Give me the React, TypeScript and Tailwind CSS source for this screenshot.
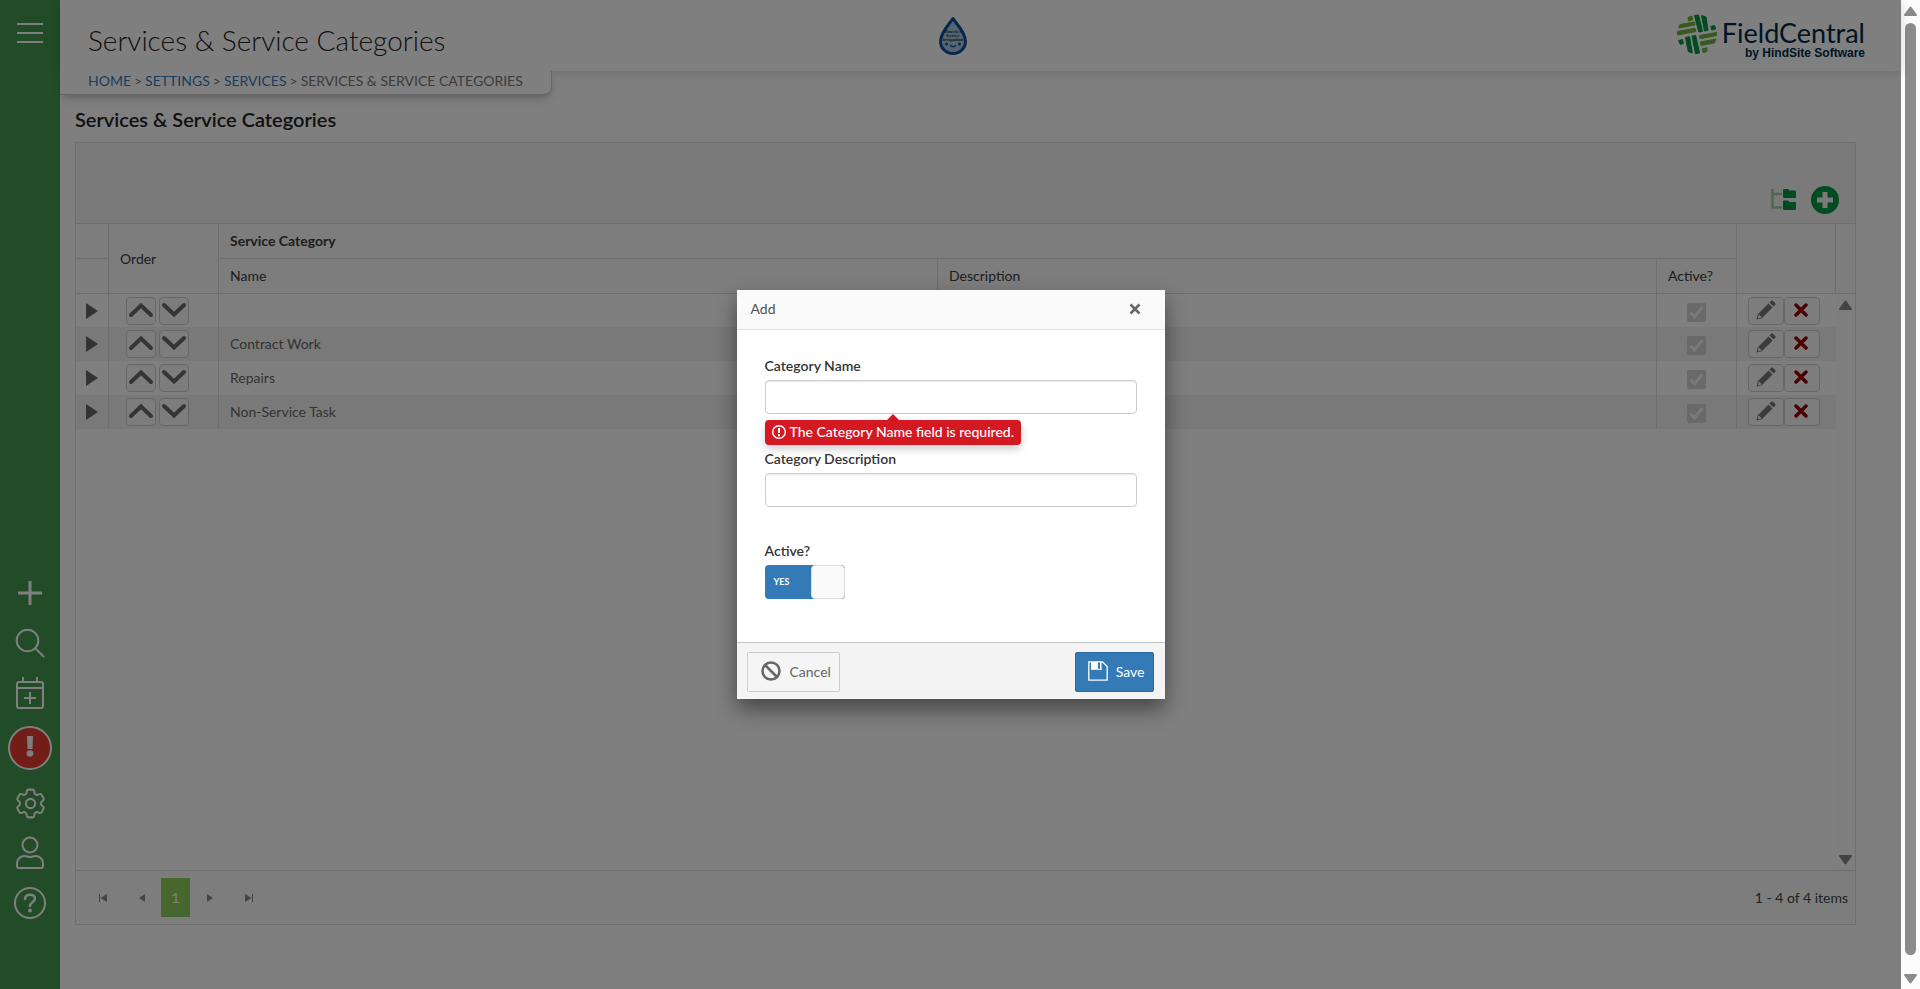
import { type ReactNode } from "react";
import { HiOutlineCog6Tooth } from "react-icons/hi2";

const categories = [
  { name: "", description: "" },
  { name: "Contract Work", description: "" },
  { name: "Repairs", description: "" },
  { name: "Non-Service Task", description: "" },
];

function DropLogo() {
  return (
    <svg width="30" height="40" viewBox="0 0 30 40" role="img" aria-label="Burch's Better Irrigation">
      <path d="M15 2.500C11.500 8 2.500 16 2.500 25.500A12.500 12 0 0 0 27.500 25.500C27.500 16 18.500 8 15 2.500Z" fill="#a9cbe3" stroke="#0f4fa0" strokeWidth="3" strokeLinejoin="round" />
      <g fill="#333" fontFamily="Liberation Serif, serif" fontSize="5" fontWeight="700" textAnchor="middle">
        <text x="15" y="17">Burch's</text>
        <text x="15" y="21">better</text>
        <text x="15" y="25">irrigation</text>
      </g>
      <circle cx="8.500" cy="28" r="1.500" fill="#0f4fa0" />
      <circle cx="21.500" cy="28" r="1.500" fill="#0f4fa0" />
      <path d="M12.500 29.500q2.500 2.500 5 0" fill="none" stroke="#0f4fa0" strokeWidth="1.500" strokeLinecap="round" />
    </svg>
  );
}

function FieldCentralLogo() {
  return (
    <div className="flex items-start gap-1 pt-0.5 text-[#002b49]">
      <svg width="42" height="42" viewBox="0 0 42 42" aria-hidden="true">
        <g fill="#6cb33f" stroke="#6cb33f" strokeWidth="1" strokeLinejoin="round">
          <path d="M12 3.500l4-1.500.5 4-4 1z" />
          <path d="M4 10.500l14.500-2.500.500 3L2.500 14z" />
          <path d="M1.500 17.500l17.500-3.200.700 3.300L1.500 21z" />
          <path d="M23.500 21.500l17-3v3L24 24.800z" />
          <path d="M24.500 28l15.500-3-1.500 4-13.500 2.500z" />
          <path d="M26.500 34.800l4.500-1v3.500l-4 1.500z" />
        </g>
        <g fill="#00963f" stroke="#00963f" strokeWidth="1" strokeLinejoin="round">
          <path d="M18.500 1.500l4-.500L26.500 17.500l-3.700.500z" />
          <path d="M25.500 1.500l4.500 1.500 2 13.500-3.500.500z" />
          <path d="M34.800 12.500l3.700-1 1.200 3.500-4 1z" />
          <path d="M2.500 26.500l4-1 .800 4-3 .8z" />
          <path d="M9.500 23.500l4-.8 2.800 16.300-4-1.500z" />
          <path d="M16 22l3.700-.5 3.800 17.500-4 .5z" />
        </g>
      </svg>
      <div className="flex flex-col items-end pt-[5px]">
        <span className="text-[27px] leading-7">FieldCentral</span>
        <span className="font-['Liberation_Sans',sans-serif] text-[12px] leading-3 font-bold">by HindSite Software</span>
      </div>
    </div>
  );
}

function SideButton({ label, className, children }: { label: string; className: string; children: ReactNode }) {
  return (
    <button type="button" aria-label={label} className={`flex w-full items-center justify-center ${className}`}>
      {children}
    </button>
  );
}

function Sidebar() {
  return (
    <nav className="flex w-15 shrink-0 flex-col bg-[#449850] pb-[62px] text-white">
      <SideButton label="Menu" className="mt-[15px] h-9">
        <svg width="26" height="20" viewBox="0 0 26 20" stroke="currentColor" strokeWidth="2">
          <path d="M0 1h26M0 10h26M0 19h26" />
        </svg>
      </SideButton>
      <div className="mt-auto flex flex-col">
        <SideButton label="Add" className="h-12">
          <svg width="24" height="24" viewBox="0 0 24 24" stroke="currentColor" strokeWidth="3">
            <path d="M0 12h24M12 0v24" />
          </svg>
        </SideButton>
        <SideButton label="Search" className="h-13">
          <svg width="30" height="30" viewBox="0 0 30 30" fill="none" stroke="currentColor" strokeWidth="2" strokeLinecap="round">
            <circle cx="12.500" cy="12.500" r="10.800" />
            <path d="M20.500 20.500l8 8" />
          </svg>
        </SideButton>
        <SideButton label="Schedule" className="h-12">
          <svg width="30" height="34" viewBox="0 0 30 34" fill="none" stroke="currentColor" strokeWidth="2">
            <rect x="2" y="6" width="26" height="26" rx="2" />
            <path d="M2 12h26M8 1v5M22 1v5M15 16v12M9 22h12" />
          </svg>
        </SideButton>
        <SideButton label="Alerts" className="h-[62px]">
          <span className="flex size-11 items-center justify-center rounded-full border-2 border-white bg-[#e53a2e] pb-0.5">
            <svg width="8" height="22" viewBox="0 0 8 22" fill="currentColor">
              <path d="M1 0h6l-.500 13h-5z" />
              <circle cx="4" cy="17.500" r="3.300" />
            </svg>
          </span>
        </SideButton>
        <SideButton label="Settings" className="h-12">
          <HiOutlineCog6Tooth size={37} strokeWidth={1.3} />
        </SideButton>
        <SideButton label="Account" className="h-13">
          <svg width="30" height="34" viewBox="0 0 30 34" fill="none" stroke="currentColor" strokeWidth="2">
            <circle cx="15" cy="9" r="7.500" />
            <path d="M9.500 20c2.500 0 3 1 5.500 1s3-1 5.500-1c4 0 7.500 3 7.500 7.500V30a2 2 0 0 1-2 2H4a2 2 0 0 1-2-2v-2.500C2 23 5.500 20 9.500 20z" />
          </svg>
        </SideButton>
        <SideButton label="Help" className="h-12">
          <svg width="32" height="32" viewBox="0 0 32 32" fill="none" stroke="currentColor">
            <circle cx="16" cy="16" r="15" strokeWidth="2" />
            <path d="M11 12c0-6 10-5.500 10-.500 0 4-5 3.500-5 7.500" strokeWidth="2.500" strokeLinecap="round" />
            <circle cx="16" cy="23.500" r="2" fill="currentColor" stroke="none" />
          </svg>
        </SideButton>
      </div>
    </nav>
  );
}

function OrderButton({ label, d }: { label: string; d: string }) {
  return (
    <button type="button" aria-label={label} className="flex h-7 w-[30px] items-start justify-center rounded border border-[#cfcfcf] bg-[#fafafa] pt-1 text-[#6a6a6a]">
      <svg width="26" height="16" viewBox="0 0 26 16" fill="none" stroke="currentColor" strokeWidth="4" strokeLinecap="round">
        <path d={d} />
      </svg>
    </button>
  );
}

function ServiceGrid() {
  const headCell = "border-r border-b border-[#dcdcdc] pl-[11px] text-left font-normal";
  return (
    <table className="w-full table-fixed border-separate border-spacing-0 text-[14px] leading-5">
      <colgroup>
        <col className="w-[33px]" />
        <col className="w-[110px]" />
        <col />
        <col />
        <col className="w-20" />
        <col className="w-[99px]" />
      </colgroup>
      <thead className="bg-[#fafafa] text-[#3c3c3c]">
        <tr className="h-[35px]">
          <td className={headCell} />
          <th rowSpan={2} className={headCell}>Order</th>
          <th colSpan={3} className="border-r border-b border-[#dcdcdc] pl-[11px] text-left font-bold">Service Category</th>
          <td rowSpan={2} className={headCell} />
        </tr>
        <tr className="h-[35px]">
          <td className={headCell} />
          <th className={headCell}>Name</th>
          <th className={headCell}>Description</th>
          <th className={headCell}>Active?</th>
        </tr>
      </thead>
      <tbody className="text-[#666]">
        {categories.map((category, i) => (
          <tr key={i} className="h-[34px] first:h-[33px] even:bg-[#f3f3f3]">
            <td className="border-r border-[#dcdcdc]">
              <button type="button" aria-label="Expand row" className="mx-auto block">
                <svg width="12" height="16" viewBox="0 0 12 16" fill="currentColor">
                  <path d="M0 0l12 8-12 8z" />
                </svg>
              </button>
            </td>
            <td className="border-r border-[#dcdcdc] pl-[17px]">
              <div className="flex gap-[3px]">
                <OrderButton label="Move up" d="M3 13L13 3.500 23 13" />
                <OrderButton label="Move down" d="M3 3L13 12.500 23 3" />
              </div>
            </td>
            <td className="pl-[11px]">{category.name}</td>
            <td className="border-r border-[#dcdcdc] pl-3">{category.description}</td>
            <td className="border-r border-[#dcdcdc] pt-[3px]">
              <label className="mx-auto grid size-[19px]">
                <input type="checkbox" aria-label="Active" defaultChecked disabled className="col-start-1 row-start-1 size-[19px] appearance-none rounded-xs bg-[#d2d2d2]" />
                <svg viewBox="0 0 19 19" className="col-start-1 row-start-1 size-[19px]" fill="none" stroke="#f2f2f2" strokeWidth="3">
                  <path d="M3.500 9.500l4 4.500 8-10" />
                </svg>
              </label>
            </td>
            <td>
              <div className="flex pl-[11px]">
                <button type="button" aria-label="Edit" className="flex h-7 w-9 items-center justify-center rounded border border-[#cfcfcf] bg-[#fafafa] pb-0.5 text-[#777]">
                  <svg width="20" height="20" viewBox="0 0 20 20" fill="currentColor">
                    <path d="M15.200.800a1.200 1.200 0 0 1 1.700 0l2.300 2.300a1.200 1.200 0 0 1 0 1.700l-1.700 1.700-4-4z" />
                    <path fillRule="evenodd" d="M12.500 3.500l4 4L5.800 18.200.500 19.500l1.300-5.300zM2.600 15l-.6 2.600.8.600 2.500-.600.300-1.200-1.500-.200-.300-1.400z" />
                  </svg>
                </button>
                <button type="button" aria-label="Delete" className="flex h-7 w-9 items-center justify-center rounded border border-[#cfcfcf] bg-[#fafafa] pr-0.5 pb-0.5 text-[#9b0000]">
                  <svg width="14" height="14" viewBox="0 0 14 14" stroke="currentColor" strokeWidth="3.500" strokeLinecap="round">
                    <path d="M2 2l10 10M12 2L2 12" />
                  </svg>
                </button>
              </div>
            </td>
          </tr>
        ))}
      </tbody>
    </table>
  );
}

function Pager() {
  const pageButton = "flex h-[39px] w-[39px] items-center justify-center text-[#8a8a8a]";
  return (
    <div className="flex h-[54px] items-center border-t border-[#dcdcdc] bg-[#fafafa] px-[7px] text-[14px] text-[#444]">
      <div className="flex flex-1">
        <button type="button" aria-label="First page" className={pageButton}>
          <svg width="8" height="8" viewBox="0 0 8 8" fill="currentColor"><path d="M0 0h1v8H0zM8 0v8L1.500 4z" /></svg>
        </button>
        <button type="button" aria-label="Previous page" className={pageButton}>
          <svg width="6" height="8" viewBox="0 0 6 8" fill="currentColor"><path d="M6 0v8L0 4z" /></svg>
        </button>
        <button type="button" className="h-[39px] w-[29px] bg-[#8cd15c] text-white">1</button>
        <button type="button" aria-label="Next page" className={pageButton}>
          <svg width="6" height="8" viewBox="0 0 6 8" fill="currentColor"><path d="M0 0v8l6-4z" /></svg>
        </button>
        <button type="button" aria-label="Last page" className={pageButton}>
          <svg width="8" height="8" viewBox="0 0 8 8" fill="currentColor"><path d="M8 0H7v8h1zM0 0v8l6.500-4z" /></svg>
        </button>
      </div>
      <span>1 - 4 of 4 items</span>
    </div>
  );
}

function ScrollArrow({ d }: { d: string }) {
  return (
    <svg width="13" height="10" viewBox="0 0 13 10" fill="currentColor" stroke="currentColor" strokeWidth="2" strokeLinejoin="round">
      <path d={d} />
    </svg>
  );
}

const arrowUp = "M6.500 1.500L12 9H1z";
const arrowDown = "M6.500 8.500L12 1H1z";

function AddDialog() {
  const input = "h-[34px] w-full rounded border border-[#ccc] bg-white px-3 text-[14px] shadow-[inset_0_1px_1px_rgba(0,0,0,0.08)] outline-none";
  const label = "mb-1 block text-[14px] leading-5 font-semibold text-[#333]";
  return (
    <form role="dialog" aria-label="Add" className="w-[428px] bg-white text-[14px] shadow-[0_10px_20px_rgba(0,0,0,0.45)]">
      <div className="flex h-10 items-center justify-between border-b border-[#e3e3e3] bg-[#fafafa] pr-6 pb-0.5 pl-3.5 text-[#515151]">
        <h2>Add</h2>
        <button type="button" aria-label="Close">
          <svg width="12" height="12" viewBox="0 0 12 12" stroke="#666" strokeWidth="2.500"><path d="M1.500 1.500l9 9M10.500 1.500l-9 9" /></svg>
        </button>
      </div>
      <div className="px-7 pt-[26px] pb-[43px]">
        <label htmlFor="category-name" className={label}>Category Name</label>
        <input id="category-name" type="text" className={input} />
        <div role="alert" className="relative mt-1.5 flex h-[25px] w-fit items-center gap-1 rounded bg-[#d51923] px-[7px] pb-0.5 font-medium text-white shadow-[0_4px_8px_rgba(0,0,0,0.2)]">
          <span className="absolute -top-1.5 left-1/2 -translate-x-1/2 border-x-6 border-b-6 border-x-transparent border-b-[#d51923]" />
          <svg width="14" height="14" viewBox="0 0 14 14" fill="none" stroke="currentColor">
            <circle cx="7" cy="7" r="6.300" strokeWidth="1.400" />
            <path d="M7 3v5M7 9.300v2" strokeWidth="2" />
          </svg>
          The Category Name field is required.
        </div>
        <label htmlFor="category-description" className={`mt-1 ${label}`}>Category Description</label>
        <input id="category-description" type="text" className={input} />
        <label htmlFor="category-active" className={`mt-[34px] ${label}`}>Active?</label>
        <label className="flex h-[34px] w-20 items-center justify-between rounded bg-[#337ab7] text-white">
          <input id="category-active" type="checkbox" role="switch" defaultChecked className="sr-only" />
          <span className="pl-[9px] text-[9px] font-bold">YES</span>
          <span className="h-[34px] w-[34px] rounded border border-[#dedede] bg-[#fafafa]" />
        </label>
      </div>
      <div className="flex justify-between border-t border-[#c4c4c4] bg-[#f4f4f4] pt-[9px] pr-[11px] pb-[7px] pl-[10px]">
        <button type="button" className="flex h-10 items-center gap-[9px] rounded-xs border border-[#ccc] bg-[#f5f5f5] pr-2 pb-0.5 pl-[13px] text-[#666]">
          <svg width="20" height="20" viewBox="0 0 20 20" fill="none" stroke="currentColor" strokeWidth="2.500">
            <circle cx="10" cy="10" r="8.500" />
            <path d="M4 4l12 12" />
          </svg>
          Cancel
        </button>
        <button type="submit" className="flex h-10 items-center gap-2 rounded-xs border border-[#2a6ba3] bg-[#337ab7] pr-2 pb-0.5 pl-3 text-white">
          <svg width="20" height="20" viewBox="0 0 20 20" fill="none" stroke="currentColor">
            <path d="M1 .800h13.500l4.700 4.700v13.700H.800V.800z" strokeWidth="1.300" />
            <path d="M3 1h7v7H3zM12 1h1.500v7H12z" fill="currentColor" stroke="none" />
            <path d="M3 8.300h11" strokeWidth="1" />
          </svg>
          Save
        </button>
      </div>
    </form>
  );
}

export default function App() {
  return (
    <div className="flex min-h-screen font-[Lato,sans-serif]">
      <div className="relative flex flex-1">
        <Sidebar />
        <div className="flex flex-1 flex-col bg-white">
          <header className="relative flex h-[71px] items-center justify-between pr-9 pl-7 shadow-[0_2px_10px_rgba(0,0,0,0.15)]">
            <h1 className="flex-1 pt-2 text-[28px] leading-9 font-light text-[#222]">Services &amp; Service Categories</h1>
            <div className="pr-12">
              <DropLogo />
            </div>
            <div className="flex flex-1 justify-end">
              <FieldCentralLogo />
            </div>
          </header>

          <div className="relative z-10 flex">
            <nav className="flex h-6 items-center gap-[3px] rounded-br-lg border-r border-b border-[#ccc] bg-white pr-7 pb-1 pl-7 text-[14px] text-[#777] shadow-[0_5px_8px_-2px_rgba(0,0,0,0.25)]">
              <a href="#home" className="text-[#337ab7]">HOME</a>
              <span>&gt;</span>
              <a href="#settings" className="text-[#337ab7]">SETTINGS</a>
              <span>&gt;</span>
              <a href="#services" className="text-[#337ab7]">SERVICES</a>
              <span>&gt;</span>
              <span>SERVICES &amp; SERVICE CATEGORIES</span>
            </nav>
          </div>

          <main className="flex flex-1 flex-col pr-[45px] pb-16 pl-[15px]">
            <h2 className="flex h-[47px] items-center text-[20px] font-semibold text-[#222]">Services &amp; Service Categories</h2>
            <section className="flex flex-1 flex-col border border-[#dcdcdc]">
              <div className="flex h-[81px] items-end justify-end gap-[15px] border-b border-[#dcdcdc] bg-[#f5f5f5] pr-4 pb-[9px] text-[#009842]">
                <button type="button" aria-label="Expand all" className="pb-0.5">
                  <svg width="25" height="24" viewBox="0 0 25 24">
                    <path d="M1.500 1v18.500H11M1.500 6H11" fill="none" stroke="currentColor" strokeWidth="2.500" opacity="0.400" />
                    <path d="M12 2a1 1 0 0 1 1-1h4l1.500 1.500H24a1 1 0 0 1 1 1V9a1 1 0 0 1-1 1H13a1 1 0 0 1-1-1zM12 13.500a1 1 0 0 1 1-1h4l1.500 1.500H24a1 1 0 0 1 1 1v6a1 1 0 0 1-1 1H13a1 1 0 0 1-1-1z" fill="currentColor" />
                  </svg>
                </button>
                <button type="button" aria-label="Add category">
                  <svg width="28" height="28" viewBox="0 0 28 28">
                    <circle cx="14" cy="14" r="14" fill="currentColor" />
                    <path d="M14 6v16M6 14h16" stroke="#f5f5f5" strokeWidth="5" />
                  </svg>
                </button>
              </div>
              <div className="flex flex-1 items-start">
                <div className="flex-1">
                  <ServiceGrid />
                </div>
                <div className="flex w-[19px] flex-col self-stretch text-[#888]">
                  <div className="h-[70px] border-b border-[#dcdcdc] bg-[#fafafa]" />
                  <div className="flex flex-1 flex-col items-center justify-between bg-[#fcfcfc] pt-1.5 pb-[5px]">
                    <ScrollArrow d={arrowUp} />
                    <ScrollArrow d={arrowDown} />
                  </div>
                </div>
              </div>
              <Pager />
            </section>
          </main>
        </div>

        {/* Modal */}
        <div className="absolute inset-0 z-20 flex items-center justify-center bg-black/50">
          <AddDialog />
        </div>
      </div>

      {/* Page scrollbar */}
      <div className="flex w-[19px] shrink-0 flex-col items-center bg-[#fcfcfc] pt-1.5 pb-[5px] text-[#8b8b8b]">
        <ScrollArrow d={arrowUp} />
        <div className="mt-[7px] mb-[19px] w-[11px] flex-1 rounded-full bg-[#8b8b8b]" />
        <ScrollArrow d={arrowDown} />
      </div>
    </div>
  );
}
